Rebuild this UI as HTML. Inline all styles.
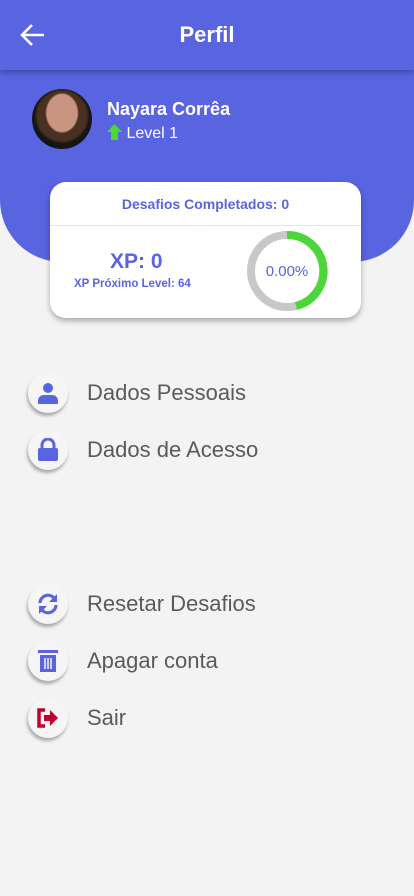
<!DOCTYPE html>
<html><head><meta charset="utf-8"><style>
*{margin:0;padding:0;box-sizing:border-box}
body{width:414px;height:896px;background:#f3f3f3;font-family:"Liberation Sans",Roboto,sans-serif;position:relative;overflow:hidden}
.blue{position:absolute;left:0;top:0;width:414px;height:262px;background:#5864e0;border-radius:0 0 62px 62px}
.hdr{position:absolute;left:0;top:0;width:414px;height:70px;background:#5864e0;box-shadow:0 3px 5px rgba(0,0,0,.25);z-index:2}
.hdr h1{position:absolute;left:0;right:0;top:22px;text-align:center;color:#fff;font-size:22px;font-weight:bold}
.av{position:absolute;left:32px;top:89px;width:60px;height:60px;border-radius:50%;background:radial-gradient(ellipse 28% 34% at 50% 40%,#c99580 0 90%,transparent 100%),radial-gradient(circle at 50% 45%,#4a3020 0 55%,#151515 62%);}
.name{position:absolute;left:107px;top:99px;color:#fff;font-size:18px;font-weight:bold}
.lvl{position:absolute;left:107px;top:124px;color:#fff;font-size:16px}
.card{position:absolute;left:50px;top:182px;width:311px;height:136px;background:#fff;border-radius:16px;box-shadow:0 3px 6px rgba(0,0,0,.3)}
.card .t{position:absolute;left:0;right:0;top:14px;text-align:center;color:#5864e0;font-weight:bold;font-size:14px}
.card .div{position:absolute;left:0;right:0;top:43px;height:1px;background:#e6e6e6}
.xp{position:absolute;left:60px;top:68px;color:#5864e0;font-weight:bold;font-size:21px}
.xpn{position:absolute;left:24px;top:96px;color:#5864e0;font-weight:bold;font-size:11.5px}
.item{position:absolute;left:28px;height:40px}
.ic{position:absolute;left:0;top:0;width:40px;height:40px;border-radius:50%;background:#f5f5f5;box-shadow:-1px 3px 3px rgba(0,0,0,.3);display:flex;align-items:center;justify-content:center}
.item span{position:absolute;left:59px;top:7px;color:#5a5a5a;font-size:22px;white-space:nowrap}
</style></head><body>
<div class="blue"></div>
<div class="hdr">
<svg style="position:absolute;left:20px;top:23px" width="26" height="24" viewBox="0 0 26 24"><path d="M24 12H3M12 2L2 12l10 10" stroke="#fff" stroke-width="2.6" fill="none"/></svg>
<h1>Perfil</h1></div>
<div class="av"></div>
<div class="name">Nayara Corrêa</div>
<div class="lvl"><svg width="15" height="16" viewBox="0 0 15 16" style="vertical-align:-2px"><path d="M7.5 0L15 8H11V16H4V8H0Z" fill="#4cd63a"/></svg> Level 1</div>
<div class="card">
<div class="t">Desafios Completados: 0</div><div class="div"></div>
<div class="xp">XP: 0</div>
<div class="xpn">XP Próximo Level: 64</div>
<svg style="position:absolute;left:196px;top:48px" width="82" height="82" viewBox="0 0 82 82">
<circle cx="41" cy="41" r="36" stroke="#c8c8c8" stroke-width="8" fill="none"/>
<path d="M41 5A36 36 0 0 1 50 76" stroke="#4cd63a" stroke-width="8" fill="none"/>
<text x="41" y="46" text-anchor="middle" font-size="15" fill="#5864e0" font-family="Liberation Sans">0.00%</text></svg>
</div>
<div class="item" style="top:373px"><div class="ic"><svg width="22" height="22" viewBox="0 0 22 22"><circle cx="11" cy="6" r="5" fill="#5864e0"/><path d="M1 22v-3c0-4 3-6 6-6h8c3 0 6 2 6 6v3z" fill="#5864e0"/></svg></div><span>Dados Pessoais</span></div>
<div class="item" style="top:430px"><div class="ic"><svg width="22" height="24" viewBox="0 0 22 24"><path d="M5 11V7a6 6 0 0 1 12 0v4" stroke="#5864e0" stroke-width="3" fill="none"/><rect x="1" y="10" width="20" height="13" rx="2" fill="#5864e0"/></svg></div><span>Dados de Acesso</span></div>
<div class="item" style="top:584px"><div class="ic"><svg width="24" height="24" viewBox="0 0 24 24"><path d="M4 11a8 8 0 0 1 14-5" stroke="#5864e0" stroke-width="3.2" fill="none"/><path d="M21 2v8h-8z" fill="#5864e0"/><path d="M20 13a8 8 0 0 1-14 5" stroke="#5864e0" stroke-width="3.2" fill="none"/><path d="M3 22v-8h8z" fill="#5864e0"/></svg></div><span>Resetar Desafios</span></div>
<div class="item" style="top:641px"><div class="ic"><svg width="22" height="24" viewBox="0 0 22 24"><rect x="1" y="1" width="20" height="3" fill="#5864e0"/><path d="M3 6h16v17H3z" fill="#5864e0"/><path d="M8 9v11M11 9v11M14 9v11" stroke="#f5f5f5" stroke-width="1.5"/></svg></div><span>Apagar conta</span></div>
<div class="item" style="top:698px"><div class="ic"><svg width="22" height="20" viewBox="0 0 22 20"><path d="M8 2H2v16h6" stroke="#c0002a" stroke-width="3.5" fill="none"/><path d="M7 7h6V2l8 8-8 8v-5H7z" fill="#c0002a"/></svg></div><span>Sair</span></div>
</body></html>
